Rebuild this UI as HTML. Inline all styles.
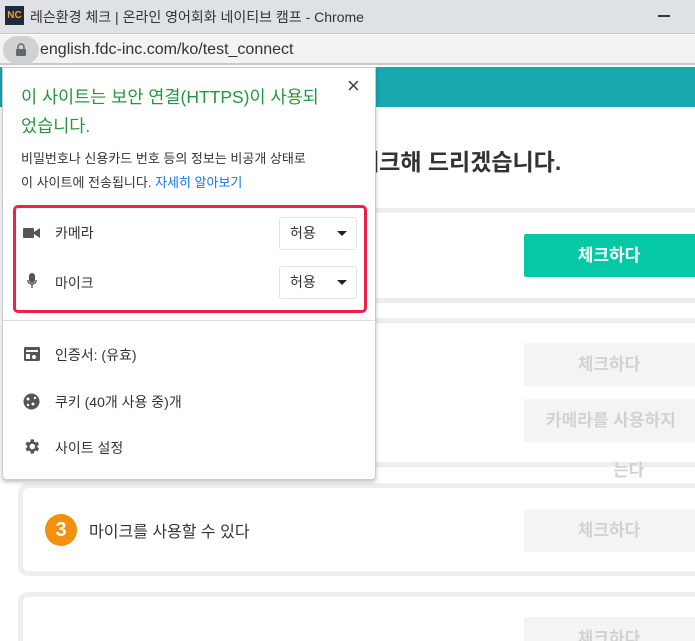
<!DOCTYPE html>
<html><head><meta charset="utf-8"><style>
*{margin:0;padding:0;box-sizing:border-box}
html,body{width:695px;height:641px;overflow:hidden}
body{background:#fff;font-family:"Liberation Sans","Noto Sans CJK KR",sans-serif;position:relative}
.a{position:absolute}
.card{position:absolute;left:18px;width:700px;border:5px solid #eeeeee;border-radius:10px;background:#fff}
.btn{position:absolute;left:524px;width:180px;height:43px;background:#f3f4f4;color:#d2d2d2;font-weight:bold;font-size:17px;text-align:center;line-height:43px;border-radius:2px;padding-right:10px}
.row{position:absolute;left:20px;font-size:14px;color:#333}
.sel{position:absolute;left:276px;width:78px;height:33px;border:1px solid #e3e3e3;border-radius:3px;font-size:14px;line-height:31px;padding-left:10px;color:#333}
.sel:after{content:"";position:absolute;right:9px;top:13px;border:5px solid transparent;border-top:5px solid #222;border-bottom:0}
</style></head><body>
<div class="a" style="left:0;top:0;width:695px;height:34px;background:#dee1e6;border-bottom:1px solid #c4c6c9"></div>
<div class="a" style="left:5px;top:6px;width:19px;height:19px;background:#1c2a44;color:#f4a21c;font-size:10px;font-weight:bold;line-height:19px;text-align:center">NC</div>
<div class="a" style="left:30px;top:7px;font-size:14px;color:#333;white-space:nowrap">레슨환경 체크 | 온라인 영어회화 네이티브 캠프 - Chrome</div>
<div class="a" style="left:658px;top:15px;width:12px;height:2px;background:#333"></div>
<div class="a" style="left:0;top:35px;width:695px;height:30px;background:#f1f3f4;border-bottom:2px solid #c9c9c9"></div>
<div class="a" style="left:3px;top:36px;width:36px;height:28px;border-radius:14px;background:#d0d1d3"></div>
<div class="a" style="left:16px;top:43px;width:10px;height:12px"><svg width="10" height="13" viewBox="0 0 10 13"><path d="M2 6V4a3 3 0 0 1 6 0v2" fill="none" stroke="#666" stroke-width="1.5"/><rect x="0" y="6" width="10" height="7" rx="1" fill="#666"/></svg></div>
<div class="a" style="left:40px;top:41px;font-size:16px;color:#333">english.fdc-inc.com/ko/test_connect</div>
<div class="a" style="left:0;top:67px;width:695px;height:40px;background:#17a8b0"></div>
<div class="a" style="left:358px;top:143px;font-size:23px;font-weight:bold;color:#333;white-space:nowrap">체크해 드리겠습니다.</div>
<div class="card" style="top:208px;height:95px"></div>
<div class="a" style="left:524px;top:234px;width:180px;height:43px;background:#04c8a6;color:#fff;font-weight:bold;font-size:17px;line-height:43px;text-align:center;border-radius:2px;padding-right:10px">체크하다</div>
<div class="card" style="top:318px;height:149px"></div>
<div class="btn" style="top:343px">체크하다</div>
<div class="btn" style="top:399px;white-space:nowrap;padding-right:0;text-align:left;padding-left:22px">카메라를 사용하지</div>
<div class="a" style="left:613px;top:456px;font-size:17px;font-weight:bold;color:#d2d2d2">는다</div>
<div class="card" style="top:483px;height:93px"></div>
<div class="a" style="left:45px;top:514px;width:32px;height:32px;border-radius:50%;background:#f3900f;color:#fff;font-weight:bold;font-size:20px;text-align:center;line-height:32px">3</div>
<div class="a" style="left:89px;top:518px;font-size:16px;color:#333">마이크를 사용할 수 있다</div>
<div class="btn" style="top:509px">체크하다</div>
<div class="card" style="top:592px;height:80px"></div>
<div class="btn" style="top:617px">체크하다</div>

<div class="a" style="left:2px;top:67px;width:374px;height:413px;background:#fff;border:1px solid #ccc;border-radius:0 0 4px 4px;box-shadow:0 2px 4px rgba(0,0,0,.25)">
<div class="a" style="left:344px;top:7px;font-size:22px;color:#444;line-height:22px">×</div>
<div class="a" style="left:18px;top:15px;width:340px;font-size:17.5px;line-height:29px;color:#26963f;white-space:nowrap">이 사이트는 보안 연결(HTTPS)이 사용되<br>었습니다.</div>
<div class="a" style="left:18px;top:79px;width:350px;font-size:13px;line-height:24px;color:#333">비밀번호나 신용카드 번호 등의 정보는 비공개 상태로<br>이 사이트에 전송됩니다. <span style="color:#1a73e8">자세히 알아보기</span></div>
<div class="a" style="left:10px;top:137px;width:354px;height:108px;border:3px solid #ee1f4b;border-radius:5px"></div>
<div class="a" style="left:20px;top:158px"><svg width="17" height="12"><rect x="0" y="1" width="11" height="10" rx="1" fill="#555"/><path d="M11 5l6-4v10l-6-4z" fill="#555"/></svg></div>
<div class="row" style="left:52px;top:155px">카메라</div>
<div class="sel" style="top:149px">허용</div>
<div class="a" style="left:24px;top:205px"><svg width="10" height="16"><rect x="2" y="0" width="6" height="10" rx="3" fill="#555"/><path d="M0.8 7a4.2 4.2 0 0 0 8.4 0M5 11v4" stroke="#555" stroke-width="1.4" fill="none"/></svg></div>
<div class="row" style="left:52px;top:205px">마이크</div>
<div class="sel" style="top:198px">허용</div>
<div class="a" style="left:0;top:252px;width:372px;height:1px;background:#ddd"></div>
<div class="a" style="left:21px;top:279px"><svg width="16" height="14"><rect width="16" height="14" rx="1.5" fill="#555"/><rect x="2" y="3" width="12" height="2" fill="#fff"/><rect x="2" y="7" width="4" height="5" fill="#fff"/><circle cx="10" cy="10" r="2" fill="#fff"/></svg></div>
<div class="row" style="left:52px;top:277px;font-size:14px">인증서: (유효)</div>
<div class="a" style="left:20px;top:325px"><svg width="17" height="17"><circle cx="8.5" cy="8.5" r="8" fill="#555"/><circle cx="5" cy="6" r="1.5" fill="#fff"/><circle cx="10" cy="11" r="1.5" fill="#fff"/><circle cx="5" cy="12" r="1.2" fill="#fff"/><circle cx="12" cy="5" r="1.2" fill="#fff"/></svg></div>
<div class="row" style="left:52px;top:324px;font-size:14px">쿠키 (40개 사용 중)개</div>
<div class="a" style="left:19px;top:369px"><svg width="19" height="19" viewBox="0 0 24 24"><path fill="#555" d="M19.4 13a7.5 7.5 0 0 0 0-2l2.1-1.6-2-3.5-2.5 1a7 7 0 0 0-1.7-1L15 3h-4l-.4 2.9a7 7 0 0 0-1.7 1l-2.5-1-2 3.5L6.6 11a7.5 7.5 0 0 0 0 2l-2.1 1.6 2 3.5 2.5-1a7 7 0 0 0 1.7 1L11 21h4l.4-2.9a7 7 0 0 0 1.7-1l2.5 1 2-3.5zM13 15.5a3.5 3.5 0 1 1 0-7 3.5 3.5 0 0 1 0 7z"/></svg></div>
<div class="row" style="left:52px;top:370px;font-size:14px">사이트 설정</div>
</div>
</body></html>
